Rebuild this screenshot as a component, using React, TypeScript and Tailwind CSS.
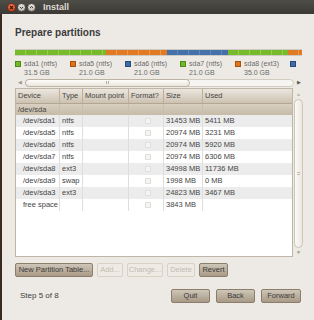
import React from "react";

const segments = [
  { w: 91, c: "green" },
  { w: 61, c: "orange" },
  { w: 61, c: "blue" },
  { w: 60, c: "green" },
  { w: 30, c: "orange" },
];

const segClass: Record<string, string> = {
  green:
    "bg-[repeating-linear-gradient(90deg,#78bb2a_0px,#78bb2a_10px,#93cf4a_10px,#93cf4a_11px)]",
  orange:
    "bg-[repeating-linear-gradient(90deg,#e17a22_0px,#e17a22_10px,#eb9848_10px,#eb9848_11px)]",
  blue:
    "bg-[repeating-linear-gradient(90deg,#4570a9_0px,#4570a9_10px,#5d87bd_10px,#5d87bd_11px)]",
};

// last entry is scrolled out of view: only its colour square shows
const legend = [
  { name: "sda1 (ntfs)", size: "31.5 GB", sq: "bg-[#74b82a] border-[#4f8a14]" },
  { name: "sda5 (ntfs)", size: "21.0 GB", sq: "bg-[#e0741c] border-[#a8510c]" },
  { name: "sda6 (ntfs)", size: "21.0 GB", sq: "bg-[#3f6ca6] border-[#234b7e]" },
  { name: "sda7 (ntfs)", size: "21.0 GB", sq: "bg-[#74b82a] border-[#4f8a14]" },
  { name: "sda8 (ext3)", size: "35.0 GB", sq: "bg-[#e0741c] border-[#a8510c]" },
  { name: "", size: "", sq: "bg-[#3f6ca6] border-[#234b7e]" },
];

const partitions = [
  { dev: "/dev/sda1", type: "ntfs", size: "31453 MB", used: "5411 MB" },
  { dev: "/dev/sda5", type: "ntfs", size: "20974 MB", used: "3231 MB" },
  { dev: "/dev/sda6", type: "ntfs", size: "20974 MB", used: "5920 MB" },
  { dev: "/dev/sda7", type: "ntfs", size: "20974 MB", used: "6306 MB" },
  { dev: "/dev/sda8", type: "ext3", size: "34998 MB", used: "11736 MB" },
  { dev: "/dev/sda9", type: "swap", size: "1998 MB", used: "0 MB" },
  { dev: "/dev/sda3", type: "ext3", size: "24823 MB", used: "3467 MB" },
  { dev: "free space", type: "", size: "3843 MB", used: "" },
];

// column widths: Device, Type, Mount point, Format?, Size
const cols = ["w-[44px]", "w-[23px]", "w-[46px]", "w-[35px]", "w-[39px]"];

const Btn = ({
  label,
  w,
  disabled,
}: {
  label: string;
  w: string;
  disabled?: boolean;
}) => (
  <div
    className={`${w} h-[14px] shrink-0 rounded-[2px] border flex items-center justify-center text-[7.5px] leading-none whitespace-nowrap ${
      disabled
        ? "bg-[#eeeae4] border-[#d8d1c6] text-[#c4bdb2]"
        : "bg-gradient-to-b from-[#cfc6b8] to-[#a89a86] border-[#8b7e6b] text-[#3a3a3a]"
    }`}
  >
    {label}
  </div>
);

const TitleBar = () => (
  <div className="h-[14px] shrink-0 bg-gradient-to-b from-[#4f4d48] to-[#3a3935] flex items-center pl-[7px]">
    <div className="w-[9px] h-[9px] rounded-full bg-gradient-to-b from-[#f47a52] to-[#d1461d] border border-[#7a2a10] flex items-center justify-center">
      <svg width="5" height="5" viewBox="0 0 5 5">
        <path d="M1 1L4 4M4 1L1 4" stroke="#3b1a0c" strokeWidth="1.1" />
      </svg>
    </div>
    <div className="ml-[1px] w-[9px] h-[9px] rounded-full bg-gradient-to-b from-[#e6e3dd] to-[#bdb9b1] border border-[#55524b] flex items-center justify-center">
      <svg width="5" height="5" viewBox="0 0 5 5">
        <path d="M1 2L2.5 3.5L4 2" stroke="#3c3b37" strokeWidth="1" fill="none" />
      </svg>
    </div>
    <div className="ml-[1px] w-[9px] h-[9px] rounded-full bg-gradient-to-b from-[#e6e3dd] to-[#bdb9b1] border border-[#55524b] flex items-center justify-center">
      <svg width="5" height="5" viewBox="0 0 5 5">
        <path d="M1 3L2.5 1.5L4 3" stroke="#3c3b37" strokeWidth="1" fill="none" />
      </svg>
    </div>
    <span className="ml-[7px] text-[9px] font-bold text-[#dfdbd2] leading-none">
      Install
    </span>
  </div>
);

export default function App() {
  return (
    <div className="w-[314px] h-[320px] bg-[#3b2a20] flex flex-col overflow-hidden font-['Liberation_Sans',Arial,sans-serif]">
      <TitleBar />
      <div className="flex-1 ml-[2px] bg-[#edeae5] flex flex-col pl-[13px] pr-[10px] overflow-hidden">
        <div className="mt-[13px] h-[12px] leading-[12px] text-[10px] font-bold text-[#3c3c3c]">
          Prepare partitions
        </div>

        {/* scrolled view: usage bar + legend */}
        <div className="w-[287px] overflow-hidden">
          <div className="mt-[10px] h-[7px] flex border-y border-[#00000022]">
            {segments.map((s, i) => (
              <div
                key={i}
                className={`${segClass[s.c]} h-full shrink-0`}
                style={{ width: s.w }}
              />
            ))}
          </div>

          <div className="mt-[3px] flex text-[7px] leading-[9px] text-[#6b6b6b]">
            {legend.map((l, i) => (
              <div key={i} className="w-[55px] shrink-0 flex h-[18px]">
                <div className={`mt-[2px] w-[6px] h-[6px] shrink-0 border ${l.sq}`} />
                {l.name && (
                  <div className="ml-[3px] whitespace-nowrap">
                    <div>{l.name}</div>
                    <div>{l.size}</div>
                  </div>
                )}
              </div>
            ))}
          </div>
        </div>

        {/* horizontal scrollbar */}
        <div className="mt-[1px] h-[9px] flex items-center">
          <span className="w-[10px] text-[5px] text-[#9a958c] text-center">◀</span>
          <div className="flex-1 h-[8px] rounded-full border border-[#d3ccc0] bg-[#f7f5f2] flex">
            <div className="w-[165px] -ml-[1px] -my-[1px] h-[8px] rounded-full border border-[#bdb3a3] bg-gradient-to-b from-[#fdfcfa] to-[#ebe6de] flex items-center justify-center">
              <div className="flex gap-[1px]">
                <div className="w-[1px] h-[3px] bg-[#b8ae9e]" />
                <div className="w-[1px] h-[3px] bg-[#b8ae9e]" />
              </div>
            </div>
          </div>
          <span className="w-[10px] text-[5px] text-[#5a5751] text-center">▶</span>
        </div>

        {/* partition table + vertical scrollbar */}
        <div className="mt-[1px] h-[169px] flex">
          <div className="w-[278px] h-full border border-[#bfb6a7] bg-white flex flex-col text-[7.5px] text-[#454545] overflow-hidden">
            <div className="h-[15px] shrink-0 flex bg-gradient-to-b from-[#ebe6de] to-[#cdc2b1] border-b border-[#b3a794]">
              {["Device", "Type", "Mount point", "Format?", "Size"].map((h, i) => (
                <div
                  key={h}
                  className={`${cols[i]} shrink-0 border-r border-[#bcb09d] pl-[2px] flex items-center whitespace-nowrap overflow-hidden`}
                >
                  {h}
                </div>
              ))}
              <div className="flex-1 pl-[2px] flex items-center">Used</div>
            </div>
            <div className="h-[11px] shrink-0 flex bg-gradient-to-b from-[#d9d0c2] to-[#c6baa7]">
              <div className={`${cols[0]} shrink-0 border-r border-[#c9bfae] pl-[2px] flex items-center`}>
                /dev/sda
              </div>
              {cols.slice(1).map((c, i) => (
                <div key={i} className={`${c} shrink-0 border-r border-[#c9bfae]`} />
              ))}
              <div className="flex-1" />
            </div>
            {partitions.map((p, idx) => (
              <div
                key={p.dev}
                className={`h-[12px] shrink-0 flex ${idx % 2 === 0 ? "bg-[#ececec]" : "bg-white"}`}
              >
                <div className={`${cols[0]} shrink-0 border-r border-[#dedede] pl-[7px] flex items-center whitespace-nowrap overflow-hidden`}>
                  {p.dev}
                </div>
                <div className={`${cols[1]} shrink-0 border-r border-[#dedede] pl-[2px] flex items-center`}>
                  {p.type}
                </div>
                <div className={`${cols[2]} shrink-0 border-r border-[#dedede]`} />
                <div className={`${cols[3]} shrink-0 border-r border-[#dedede] flex items-center justify-end pr-[12px]`}>
                  <div className="w-[6px] h-[6px] border border-[#e2e0dc] bg-[#f6f5f3]" />
                </div>
                <div className={`${cols[4]} shrink-0 border-r border-[#dedede] pl-[2px] flex items-center whitespace-nowrap`}>
                  {p.size}
                </div>
                <div className="flex-1 pl-[2px] flex items-center whitespace-nowrap">{p.used}</div>
              </div>
            ))}
          </div>
          <div className="w-[11px] h-full bg-[#ede9e3] flex flex-col items-center">
            <span className="mt-[3px] h-[7px] text-[5px] leading-[7px] text-[#bdb7ad]">▲</span>
            <div className="mt-[1px] w-[9px] flex-1 rounded-full border border-[#cdc5b8] bg-gradient-to-r from-[#fbfaf8] to-[#ece7df] flex items-center justify-center">
              <div className="flex flex-col gap-[1px]">
                <div className="w-[3px] h-[1px] bg-[#c2b9aa]" />
                <div className="w-[3px] h-[1px] bg-[#c2b9aa]" />
              </div>
            </div>
            <span className="mt-[1px] mb-[1px] h-[7px] text-[5px] leading-[7px] text-[#9a958c]">▼</span>
          </div>
        </div>

        {/* partition action buttons */}
        <div className="mt-[6px] flex gap-[4px]">
          <Btn label="New Partition Table..." w="w-[78px]" />
          <Btn label="Add..." w="w-[26px]" disabled />
          <Btn label="Change..." w="w-[36px]" disabled />
          <Btn label="Delete" w="w-[28px]" disabled />
          <Btn label="Revert" w="w-[29px]" />
        </div>

        {/* wizard footer */}
        <div className="mt-[12px] flex items-center">
          <span className="ml-[5px] text-[8px] text-[#3c3c3c]">Step 5 of 8</span>
          <div className="ml-auto mr-[3px] flex gap-[6px]">
            <Btn label="Quit" w="w-[39px]" />
            <Btn label="Back" w="w-[39px]" />
            <Btn label="Forward" w="w-[40px]" />
          </div>
        </div>
      </div>
    </div>
  );
}
